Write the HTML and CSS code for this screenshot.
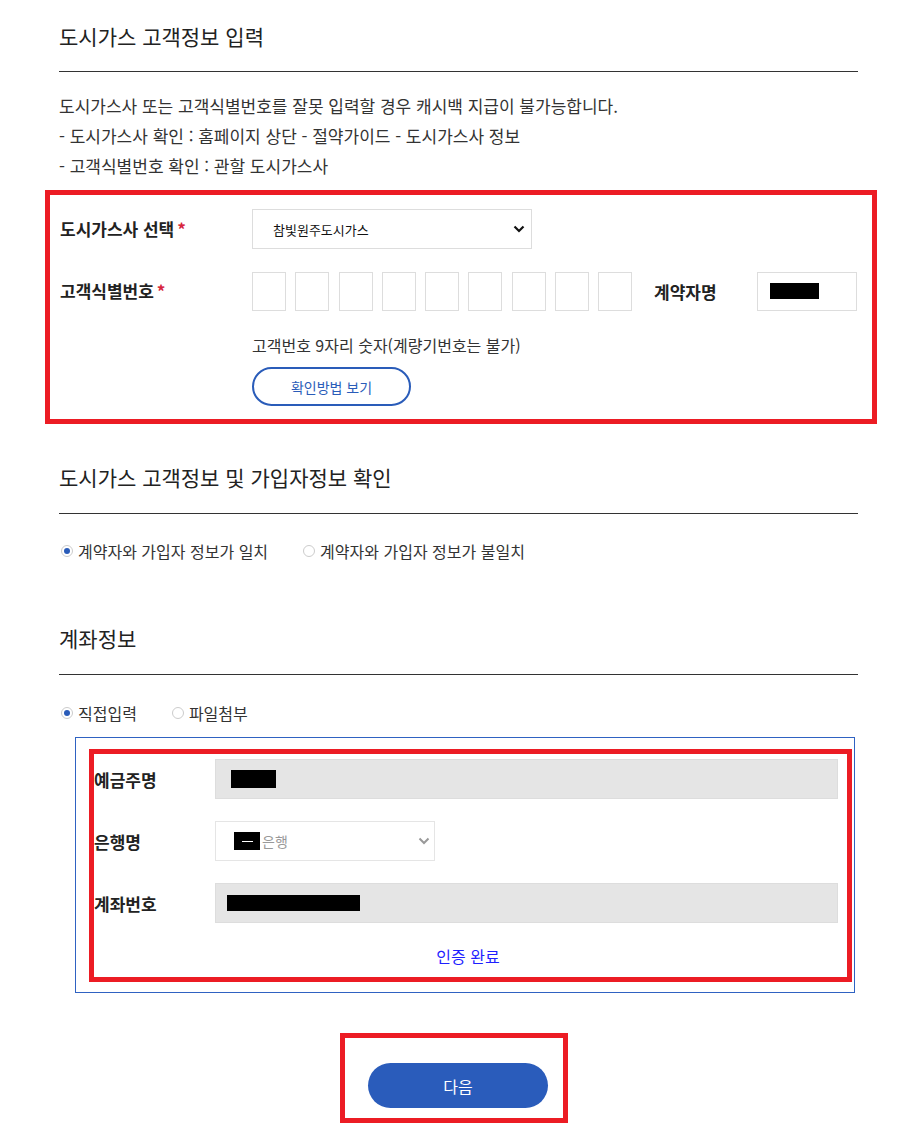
FILE: index.html
```html
<!DOCTYPE html>
<html lang="ko">
<head>
<meta charset="utf-8">
<title>도시가스 고객정보 입력</title>
<link rel="stylesheet" href="styles.css">
</head>
<body>
<div class="page">
  <h2 class="sec-title first">도시가스 고객정보 입력</h2>
  <div class="notice">
    <p>도시가스사 또는 고객식별번호를 잘못 입력할 경우 캐시백 지급이 불가능합니다.</p>
    <p>- 도시가스사 확인 : 홈페이지 상단 - 절약가이드 - 도시가스사 정보</p>
    <p>- 고객식별번호 확인 : 관할 도시가스사</p>
  </div>

  <div class="mark mark-gas">
    <div class="row">
      <div class="label">도시가스사 선택<span class="req">*</span></div>
      <div class="select gas-select">
        <span class="sel-text">참빛원주도시가스</span>
        <svg class="chev" width="12" height="8" viewBox="0 0 12 8"><path d="M1.5 1.5 L6 6 L10.5 1.5" fill="none" stroke="#111" stroke-width="2.2"/></svg>
      </div>
    </div>
    <div class="row row-num">
      <div class="label">고객식별번호<span class="req">*</span></div>
      <div class="digits">
        <span class="digit"></span><span class="digit"></span><span class="digit"></span>
        <span class="digit"></span><span class="digit"></span><span class="digit"></span>
        <span class="digit"></span><span class="digit"></span><span class="digit"></span>
      </div>
      <div class="label2">계약자명</div>
      <div class="name-box"><span class="redact r-name"></span></div>
    </div>
    <div class="hint">고객번호 9자리 숫자(계량기번호는 불가)</div>
    <button class="btn-outline" type="button">확인방법 보기</button>
  </div>

  <h2 class="sec-title sec2">도시가스 고객정보 및 가입자정보 확인</h2>
  <div class="radios">
    <label class="radio"><span class="dot on"></span>계약자와 가입자 정보가 일치</label>
    <label class="radio r2"><span class="dot"></span>계약자와 가입자 정보가 불일치</label>
  </div>

  <h2 class="sec-title sec3">계좌정보</h2>
  <div class="radios radios-acc">
    <label class="radio"><span class="dot on"></span>직접입력</label>
    <label class="radio r3"><span class="dot"></span>파일첨부</label>
  </div>

  <div class="acc-box">
    <div class="mark mark-acc">
      <div class="arow">
        <div class="alabel">예금주명</div>
        <div class="field gray"><span class="redact r-holder"></span></div>
      </div>
      <div class="arow">
        <div class="alabel">은행명</div>
        <div class="field bank">
          <span class="bank-text"><span class="redact r-bank"><span class="dash"></span></span>은행</span>
          <svg class="chev" width="12" height="8" viewBox="0 0 12 8"><path d="M1.5 1.5 L6 6 L10.5 1.5" fill="none" stroke="#999" stroke-width="2"/></svg>
        </div>
      </div>
      <div class="arow">
        <div class="alabel">계좌번호</div>
        <div class="field gray"><span class="redact r-acc"></span></div>
      </div>
      <div class="done"><a class="done-link">인증 완료</a></div>
    </div>
  </div>

  <div class="mark mark-btn">
    <button class="btn-next" type="button">다음</button>
  </div>
</div>
</body>
</html>
```

FILE: styles.css
```css
* { box-sizing: border-box; }
html, body { margin: 0; padding: 0; background: #fff; }
body {
  font-family: "Noto Sans CJK KR", "Noto Sans", sans-serif;
  color: #333;
  font-size: 16px;
}
.page {
  width: 919px;
  padding: 0 61px 0 59px;
}
.sec-title {
  margin: 38px 0 0;
  font-size: 21px;
  font-weight: 400;
  line-height: 30px;
  color: #222;
  padding-bottom: 21px;
  border-bottom: 1px solid #333;
}
.sec-title.first { margin-top: 21px; padding-bottom: 20px; }
.sec-title.sec3 { margin-top: 60px; }

.notice { margin-top: 19px; }
.notice p {
  margin: 0;
  line-height: 30px;
  font-size: 17px;
  color: #333;
}

.mark { border: 5px solid #ec1c24; }

.mark-gas {
  margin: 9px -19px 0 -14px;
  padding: 14px 0 13px 10px;
}
.row { display: flex; align-items: center; }
.row-num { margin-top: 23px; }
.label {
  width: 192px;
  font-size: 17px;
  font-weight: 700;
  color: #222;
  line-height: 24px;
}
.row-num .label { align-self: flex-start; padding-top: 7px; }
.req { color: #d7263d; margin-left: 3px; }
.select {
  display: flex;
  align-items: center;
  justify-content: space-between;
  border: 1px solid #ddd;
  background: #fff;
}
.gas-select {
  width: 280px;
  height: 40px;
  padding: 0 6px 0 20px;
}
.sel-text { font-size: 13px; color: #111; }
.chev { display: block; }
.digits { display: flex; gap: 9.25px; }
.digit {
  width: 34px;
  height: 39px;
  border: 1px solid #ddd;
  display: block;
}
.label2 {
  margin-left: 22px;
  width: 103px;
  font-size: 17px;
  font-weight: 700;
  color: #222;
}
.name-box {
  width: 100px;
  height: 39px;
  border: 1px solid #ddd;
  display: flex;
  align-items: center;
  padding-left: 12px;
}
.redact { display: inline-block; background: #000; }
.r-name { width: 49px; height: 16px; margin-top: -2px; }
.hint {
  margin: 22px 0 0 192px;
  line-height: 24px;
  font-size: 16px;
  color: #333;
}
.btn-outline {
  display: block;
  margin: 10px 0 0 192px;
  width: 159px;
  height: 39px;
  border: 2px solid #2a5cb9;
  border-radius: 20px;
  background: #fff;
  color: #2a5cb9;
  font-family: inherit;
  font-size: 14px;
  padding: 0;
}

.radios {
  display: flex;
  margin-top: 25px;
  line-height: 24px;
}
.radios-acc { margin-top: 26px; }
.radio {
  display: flex;
  align-items: center;
  font-size: 16px;
  color: #333;
}
.radio.r2 { margin-left: 33px; }
.radio.r3 { margin-left: 33px; }
.dot {
  width: 12px;
  height: 12px;
  border: 1px solid #ccc;
  border-radius: 50%;
  margin: 0 5px 0 2px;
  display: flex;
  align-items: center;
  justify-content: center;
}
.dot.on::after {
  content: "";
  width: 6px;
  height: 6px;
  border-radius: 50%;
  background: #2a5cb9;
}

.acc-box {
  margin: 12px 3px 0 16px;
  border: 1px solid #2f62c2;
  padding: 11px 2px 10px 13px;
}
.mark-acc { padding: 5px 9px 9px 0; }
.arow {
  display: flex;
  align-items: center;
  margin-bottom: 22px;
}
.arow:nth-child(3) { margin-bottom: 0; }
.alabel {
  width: 121px;
  font-size: 17px;
  font-weight: 700;
  color: #222;
}
.field {
  height: 40px;
  border: 1px solid #ddd;
  display: flex;
  align-items: center;
}
.field.gray { flex: 1; background: #e5e5e5; }
.field.bank {
  width: 220px;
  background: #fff;
  border-color: #e5e5e5;
  justify-content: space-between;
  padding: 0 4px 0 18px;
}
.bank-text { display: flex; align-items: center; font-size: 14px; color: #999; }
.r-bank {
  width: 26px;
  height: 18px;
  margin-right: 2px;
  display: flex;
  align-items: center;
  justify-content: center;
}
.dash { width: 11px; height: 1px; background: #fff; display: block; }
.r-holder { width: 45px; height: 18px; margin-left: 15px; }
.r-acc { width: 133px; height: 16px; margin-left: 11px; }
.done {
  margin-top: 21px;
  text-align: center;
  line-height: 24px;
  padding-left: 4px;
}
.done-link { color: #1f1fff; font-size: 16px; }

.mark-btn {
  width: 228px;
  margin: 40px 0 0 281px;
  padding: 25px 15px 10px 23px;
}
.btn-next {
  display: block;
  width: 180px;
  height: 45px;
  border: 0;
  border-radius: 23px;
  background: #2a5cbb;
  color: #fff;
  font-family: inherit;
  font-size: 16px;
  padding: 0;
}
```
